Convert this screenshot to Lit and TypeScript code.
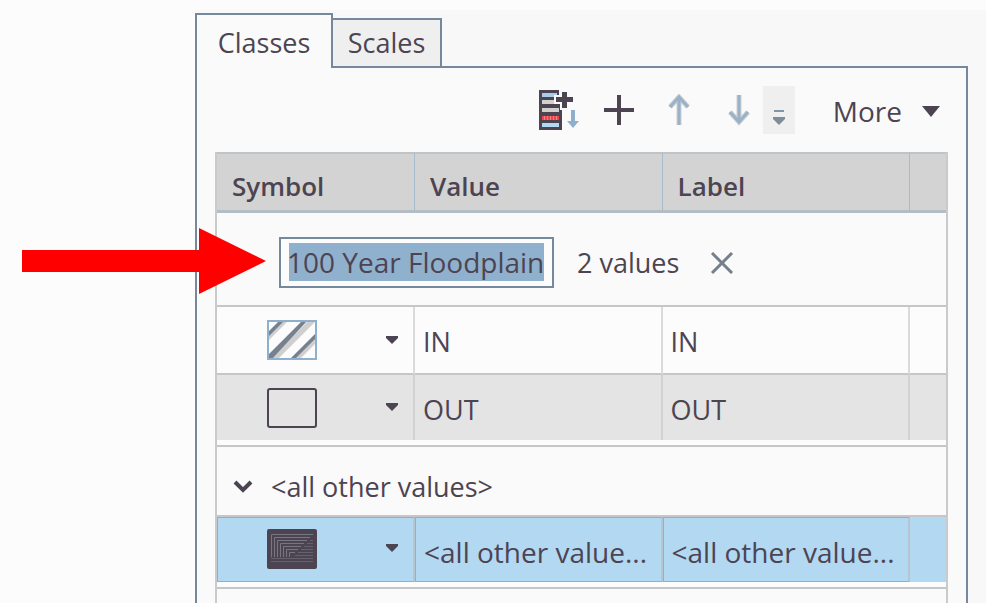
import { LitElement, html, css, svg } from "lit";
import { customElement, state, query } from "lit/decorators.js";

interface ClassRow {
  value: string;
  label: string;
  symbol: "hatch" | "outline" | "solid";
}

const caret = html`<svg class="caret" viewBox="0 0 12 9" aria-hidden="true"><path d="M0 0h12v2L6 8 0 2z" fill="#4d4452" /></svg>`;

const swatches = {
  hatch: svg`
    <rect x="1" y="1" width="48" height="38" fill="#fcfcfc" />
    <path d="M11 39L48 2H40L4 38zM33 39L49 23V16L26 39zM2 20L20 2H14L2 14z" fill="#cfcfcf" />
    <path d="M1 38V35L35 1H40L5 39H2zM23 39L49 13V18L28 39zM1 17V12L12 1H17z" fill="#76818f" />
    <rect x="1" y="1" width="48" height="38" fill="none" stroke="#8fb0cc" stroke-width="2" />`,
  outline: svg`<rect x="1" y="1" width="48" height="38" rx="2" fill="#e4e4e4" stroke="#4d4452" stroke-width="2" />`,
  solid: svg`
    <rect width="50" height="40" rx="2" fill="#4d4452" />
    <g fill="none" stroke="#77777f" stroke-width="1">
      <path d="M4.500 28V5.500H46M7.500 28V8.500H43M10.500 28V11.500H40M13.500 28V14.500H37M16.500 28V17.500H34M19.500 28V20.500H31M22.500 28V23.500H28" />
      <path d="M4 29.500H46M4 32.500H46M28 26.500H46M31 23.500H46M34 20.500H46M37 17.500H46M40 14.500H46M43 11.500H46" stroke="#65626c" />
    </g>`,
};

@customElement("app-root")
export class AppRoot extends LitElement {
  @state() private heading = "100 Year Floodplain";
  @query(".heading") private headingBox!: HTMLInputElement;

  private rows: ClassRow[] = [
    { value: "IN", label: "IN", symbol: "hatch" },
    { value: "OUT", label: "OUT", symbol: "outline" },
  ];

  static styles = css`
    :host {
      display: block;
      position: relative;
      min-height: 100vh;
      background: #fcfcfc;
      color: #4d4452;
      font: 500 27px/36px "Open Sans", "Noto Sans", sans-serif;
    }
    * { box-sizing: border-box; }
    button, input {
      font: inherit;
      color: inherit;
      background: none;
      border: 0;
      margin: 0;
      padding: 0;
    }
    svg { display: block; }
    .page {
      display: flex;
      min-height: 100vh;
      padding: 10px 0 0 195px;
      overflow: hidden;
    }
    .dock {
      flex: 1;
      min-width: 0;
      display: flex;
      flex-direction: column;
      padding: 3px 18px 0 0;
      background: #f8f8f8;
    }
    .tabs { display: flex; height: 53px; }
    .tab { border: 2px solid #76889b; }
    .tab.current {
      width: 138px;
      height: 55px;
      border-bottom: 0;
      background: #fafafa;
      padding-top: 2px;
    }
    .tab.other {
      width: 109px;
      height: 50px;
      border-left: 0;
      margin-top: 5px;
      background: #efefef;
    }
    .strip { flex: 1; }
    .edge { display: flex; height: 2px; flex: none; }
    .edge .open { width: 136px; background: #fafafa; border-left: 2px solid #76889b; }
    .edge .line { flex: 1; background: #76889b; }
    .panel {
      flex: 1;
      display: flex;
      flex-direction: column;
      border: solid #76889b;
      border-width: 0 2px;
      background: #fafafa;
      padding: 0 18px;
    }
    .toolbar {
      display: flex;
      align-items: center;
      justify-content: flex-end;
      height: 84px;
      padding-right: 8px;
    }
    .tools { display: flex; gap: 20px; margin-right: 4px; }
    .tool {
      width: 40px;
      height: 48px;
      display: grid;
      place-items: center;
    }
    .overflow {
      width: 32px;
      height: 48px;
      background: #efefef;
      display: grid;
      place-items: center;
      margin-right: 38px;
    }
    .more {
      display: flex;
      align-items: center;
      gap: 20px;
      padding-top: 2px;
      font-size: 28px;
    }
    .grid {
      flex: 1;
      border: solid #c9cacc;
      border-width: 0 2px;
    }
    table {
      width: 100%;
      table-layout: fixed;
      border-collapse: separate;
      border-spacing: 0;
    }
    .col-symbol { width: 198px; }
    .col-end { width: 36px; }
    th, td { padding: 0; text-align: left; font-weight: inherit; }
    thead th {
      height: 61px;
      background: #d4d3d3;
      border-top: 2px solid #bfc4c9;
      border-bottom: 3px solid #b4bdc5;
      border-right: 1px solid #a9bccb;
      padding: 7px 0 0 15px;
      font-weight: 600;
      font-size: 26px;
    }
    thead th:last-child { border-right: 0; }
    .group td { border-bottom: 2px solid #c4c6c8; }
    .group-line { display: flex; align-items: center; }
    .editing { height: 92px; padding: 6px 0 0 62px; }
    .heading {
      width: 275px;
      height: 51px;
      border: 2px solid #76889b;
      background: #fcfcfc;
      padding: 0 8px;
      font-size: 28px;
      line-height: 38px;
      outline: 0;
      caret-color: transparent;
      margin-right: 23px;
    }
    .heading::selection { background: rgba(143, 176, 204, 0.99); color: #4d4452; }
    .count, .remove { padding-top: 2px; }
    .remove { margin-left: 31px; }
    .item td {
      height: 68px;
      border-right: 2px solid #dadada;
      border-bottom: 2px solid #c4c6c8;
      background: #fcfcfc;
      padding: 4px 0 0 8px;
    }
    .item td:last-child { border-right: 0; }
    .item.alt td {
      height: 65px;
      background: #e4e4e4;
      border-right-color: #d2d2d2;
      border-bottom: 0;
      padding-top: 4px;
    }
    .item .symbol, .item.alt .symbol { padding: 0 15px 0 50px; }
    .pick {
      display: flex;
      align-items: center;
      justify-content: space-between;
      width: 100%;
    }
    .swatch { width: 50px; height: 40px; }
    .caret { width: 12px; height: 9px; }
    .gap td { height: 7px; background: #fcfcfc; border-bottom: 2px solid #c4c6c8; }
    .fold { display: flex; align-items: center; gap: 18px; height: 68px; padding: 11px 0 0 16px; }
    .item.chosen td {
      height: 65px;
      background: #b2d8f2;
      border: 1px solid #8fb0cc;
      border-right: 2px solid #b9c5ce;
      overflow: hidden;
      white-space: nowrap;
      font-size: 28px;
      padding-top: 4px;
    }
    .item.chosen .symbol { padding: 0 15px 2px 49px; }
    .item.chosen td:last-child { border: 0; }
    .arrow {
      position: absolute;
      left: 22px;
      top: 228px;
      width: 244px;
      height: 66px;
    }
  `;

  firstUpdated() {
    this.headingBox.focus();
    this.headingBox.select();
  }

  private symbol(kind: ClassRow["symbol"]) {
    return html`<td class="symbol">
      <button class="pick" aria-label="Change symbol">
        <svg class="swatch" viewBox="0 0 50 40">${swatches[kind]}</svg>
        ${caret}
      </button>
    </td>`;
  }

  render() {
    return html`
      <main class="page">
        <section class="dock">
          <div class="tabs" role="tablist">
            <button class="tab current" role="tab" aria-selected="true">Classes</button>
            <button class="tab other" role="tab" aria-selected="false">Scales</button>
            <span class="strip"></span>
          </div>
          <div class="edge"><span class="open"></span><span class="line"></span></div>
          <div class="panel">
            <div class="toolbar">
              <div class="tools">
                <button class="tool" aria-label="Add all values">
                  <svg width="40" height="42" viewBox="0 0 40 42">
                    <path d="M0 1h20v8h-3v6h5v5h1v21H0z" fill="#4d4452" />
                    <path d="M3 4h15v4H3z" fill="#a9cde8" />
                    <path d="M3 11h12v4H3zM3 19h17v4H3z" fill="#d2cfcf" />
                    <path d="M3 27h17v4H3z" fill="#e6868a" />
                    <path d="M3 28h17M3 30h17" stroke="#f00" stroke-width="1" stroke-dasharray="2 1" />
                    <path d="M3 34h17v4H3z" fill="#b2d8f2" />
                    <path d="M23 3h5v5h6v5h-6v6h-5v-6h-6V8h6z" fill="#4d4452" stroke="#fafafa" stroke-width="4" paint-order="stroke" />
                    <path d="M32 21h4v11h4l-6 7-6-7h4z" fill="#8fb0cc" />
                  </svg>
                </button>
                <button class="tool" aria-label="Add values">
                  <svg width="30" height="30" viewBox="0 0 30 30"><path d="M15 0v30M0 15h30" stroke="#4d4452" stroke-width="4" /></svg>
                </button>
                <button class="tool" aria-label="Move up">
                  <svg width="22" height="32" viewBox="0 0 22 32" fill="none">
                    <path d="M11 31V3M2 13l9-10 9 10" stroke="#cfcfcf" stroke-width="5" />
                    <path d="M11 31V3M2 13l9-10 9 10" stroke="#98b3c9" stroke-width="3" />
                  </svg>
                </button>
                <button class="tool" aria-label="Move down">
                  <svg width="22" height="32" viewBox="0 0 22 32" fill="none">
                    <path d="M11 1v28M2 18l9 10 9-10" stroke="#cfcfcf" stroke-width="5" />
                    <path d="M11 1v28M2 18l9 10 9-10" stroke="#98b3c9" stroke-width="3" />
                  </svg>
                </button>
              </div>
              <button class="overflow" aria-label="More tools">
                <svg width="12" height="32" viewBox="0 0 12 32">
                  <path d="M1 16h10v2H1z" fill="#7f95a8" />
                  <path d="M0 23h12v2l-6 6-6-6z" fill="#7f8c99" />
                </svg>
              </button>
              <button class="more">More
                <svg width="18" height="11" viewBox="0 0 18 11"><path d="M0 0h18L9 11z" fill="#4d4452" /></svg>
              </button>
            </div>
            <div class="grid">
              <table>
                <colgroup>
                  <col class="col-symbol" /><col /><col /><col class="col-end" />
                </colgroup>
                <thead>
                  <tr><th>Symbol</th><th>Value</th><th>Label</th><th></th></tr>
                </thead>
                <tbody>
                  <tr class="group">
                    <td colspan="4">
                      <div class="group-line editing">
                        <input class="heading" aria-label="Group heading" .value=${this.heading} spellcheck="false"
                          @input=${(e: Event) => (this.heading = (e.target as HTMLInputElement).value)} />
                        <span class="count">2 values</span>
                        <button class="remove" aria-label="Remove group">
                          <svg width="24" height="22" viewBox="0 0 24 22"><path d="M2 1l20 20M22 1L2 21" stroke="#76808c" stroke-width="3" /></svg>
                        </button>
                      </div>
                    </td>
                  </tr>
                  ${this.rows.map(
                    (r, i) => html`<tr class="item ${i % 2 ? "alt" : ""}">
                      ${this.symbol(r.symbol)}
                      <td>${r.value}</td><td>${r.label}</td><td></td>
                    </tr>`
                  )}
                  <tr class="gap"><td colspan="4"></td></tr>
                  <tr class="group">
                    <td colspan="4">
                      <button class="fold" aria-expanded="true">
                        <svg width="20" height="14" viewBox="0 0 20 14" fill="none"><path d="M2 2l8 8 8-8" stroke="#4d4452" stroke-width="4" /></svg>
                        &lt;all other values&gt;
                      </button>
                    </td>
                  </tr>
                  <tr class="item chosen">
                    ${this.symbol("solid")}
                    <td>&lt;all other value...</td><td>&lt;all other value...</td><td></td>
                  </tr>
                  <tr class="gap"><td colspan="4"></td></tr>
                </tbody>
              </table>
            </div>
          </div>
        </section>
      </main>
      <svg class="arrow" viewBox="0 0 244 66" aria-hidden="true">
        <path d="M0 22h177V0l67 33-67 33V44H0z" fill="#f00" />
      </svg>
    `;
  }
}
